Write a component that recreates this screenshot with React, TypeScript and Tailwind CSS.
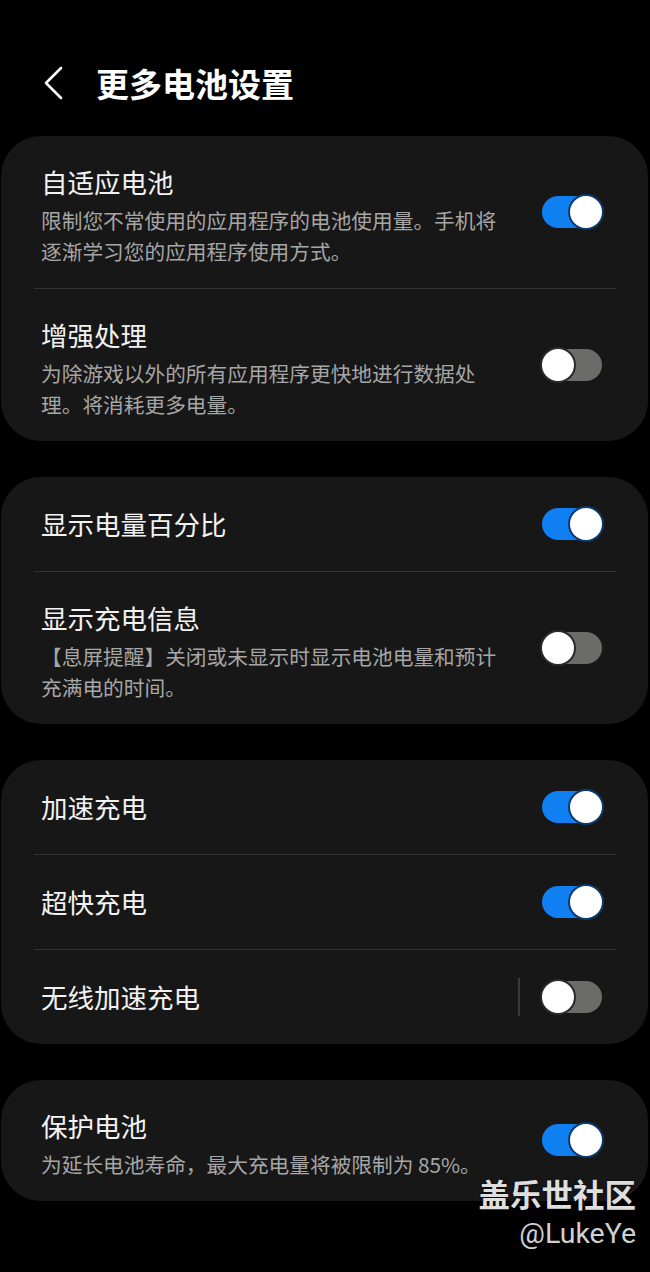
import React from 'react';

interface Setting {
  title: string;
  desc?: string;
  on: boolean;
  divider?: boolean;
}

const groups: Setting[][] = [
  [
    { title: '自适应电池', desc: '限制您不常使用的应用程序的电池使用量。手机将逐渐学习您的应用程序使用方式。', on: true },
    { title: '增强处理', desc: '为除游戏以外的所有应用程序更快地进行数据处理。将消耗更多电量。', on: false },
  ],
  [
    { title: '显示电量百分比', on: true },
    { title: '显示充电信息', desc: '【息屏提醒】关闭或未显示时显示电池电量和预计充满电的时间。', on: false },
  ],
  [
    { title: '加速充电', on: true },
    { title: '超快充电', on: true },
    { title: '无线加速充电', on: false, divider: true },
  ],
  [{ title: '保护电池', desc: '为延长电池寿命，最大充电量将被限制为 85%。', on: true }],
];

const Toggle: React.FC<{ on: boolean; raised?: boolean }> = ({ on, raised }) => (
  <div className={`relative w-[64px] h-[36px] flex items-center shrink-0 ${raised ? 'mb-[6px]' : ''}`}>
    <div className={`h-[32px] w-full mx-[2px] rounded-full ${on ? 'bg-[#0f7ff2]' : 'bg-[#6b6b68]'}`} />
    <div
      className={`absolute top-0 w-[36px] h-[36px] rounded-full bg-white border-2 ${
        on ? 'right-0 border-[#0c3a6e]' : 'left-0 border-[#2a2a2a]'
      }`}
    />
  </div>
);

const Row: React.FC<{ item: Setting }> = ({ item }) => (
  <div
    className={`flex items-center pl-[40px] pr-[44px] ${
      item.desc ? 'pt-[26px] pb-[21px]' : 'h-[94px]'
    }`}
  >
    <div className="flex-1 min-w-0">
      <div className="text-[26.5px] leading-[40px] text-[#f2f2f2]">{item.title}</div>
      {item.desc && (
        <div className="mt-[3px] max-w-[470px] text-[20.7px] leading-[31px] text-[#a6a6a6]">
          {item.desc}
        </div>
      )}
    </div>
    {item.divider && <div className="w-[2px] h-[38px] bg-[#3a3a3a] mr-[20px]" />}
    <Toggle on={item.on} raised={!!item.desc} />
  </div>
);

export default function App() {
  return (
    <div
      className="relative min-h-[1272px] bg-black"
      style={{ fontFamily: '"Noto Sans CJK SC", "Noto Sans", sans-serif' }}
    >
      <div className="h-[136px] pt-[30px] flex items-center pl-[44px]">
        <svg width="20" height="34" viewBox="0 0 20 34" fill="none" className="shrink-0">
          <path d="M17 2 L2 17 L17 32" stroke="#ffffff" strokeWidth="2.6" strokeLinecap="round" strokeLinejoin="round" />
        </svg>
        <h1 className="ml-[32px] text-[33px] font-bold text-white leading-none">更多电池设置</h1>
      </div>

      <div className="flex flex-col gap-[36px] ml-[1px] mr-[2px]">
        {groups.map((group, gi) => (
          <div key={gi} className="bg-[#171717] rounded-[40px]">
            {group.map((item, i) => (
              <React.Fragment key={item.title}>
                {i > 0 && <div className="h-px bg-[#333333] ml-[33px] mr-[32px]" />}
                <Row item={item} />
              </React.Fragment>
            ))}
          </div>
        ))}
      </div>

      <div className="absolute right-[14px] top-[1174px] flex flex-col items-end">
        <div className="text-[31.5px] font-bold leading-[38px] text-[#dedede] [text-shadow:0_0_2px_#000]">
          盖乐世社区
        </div>
        <div
          className="mt-[5px] text-[28.5px] leading-[34px] text-[#d0d0d0]"
          style={{ fontFamily: 'Roboto, "Noto Sans", sans-serif' }}
        >
          @LukeYe
        </div>
      </div>
    </div>
  );
}
